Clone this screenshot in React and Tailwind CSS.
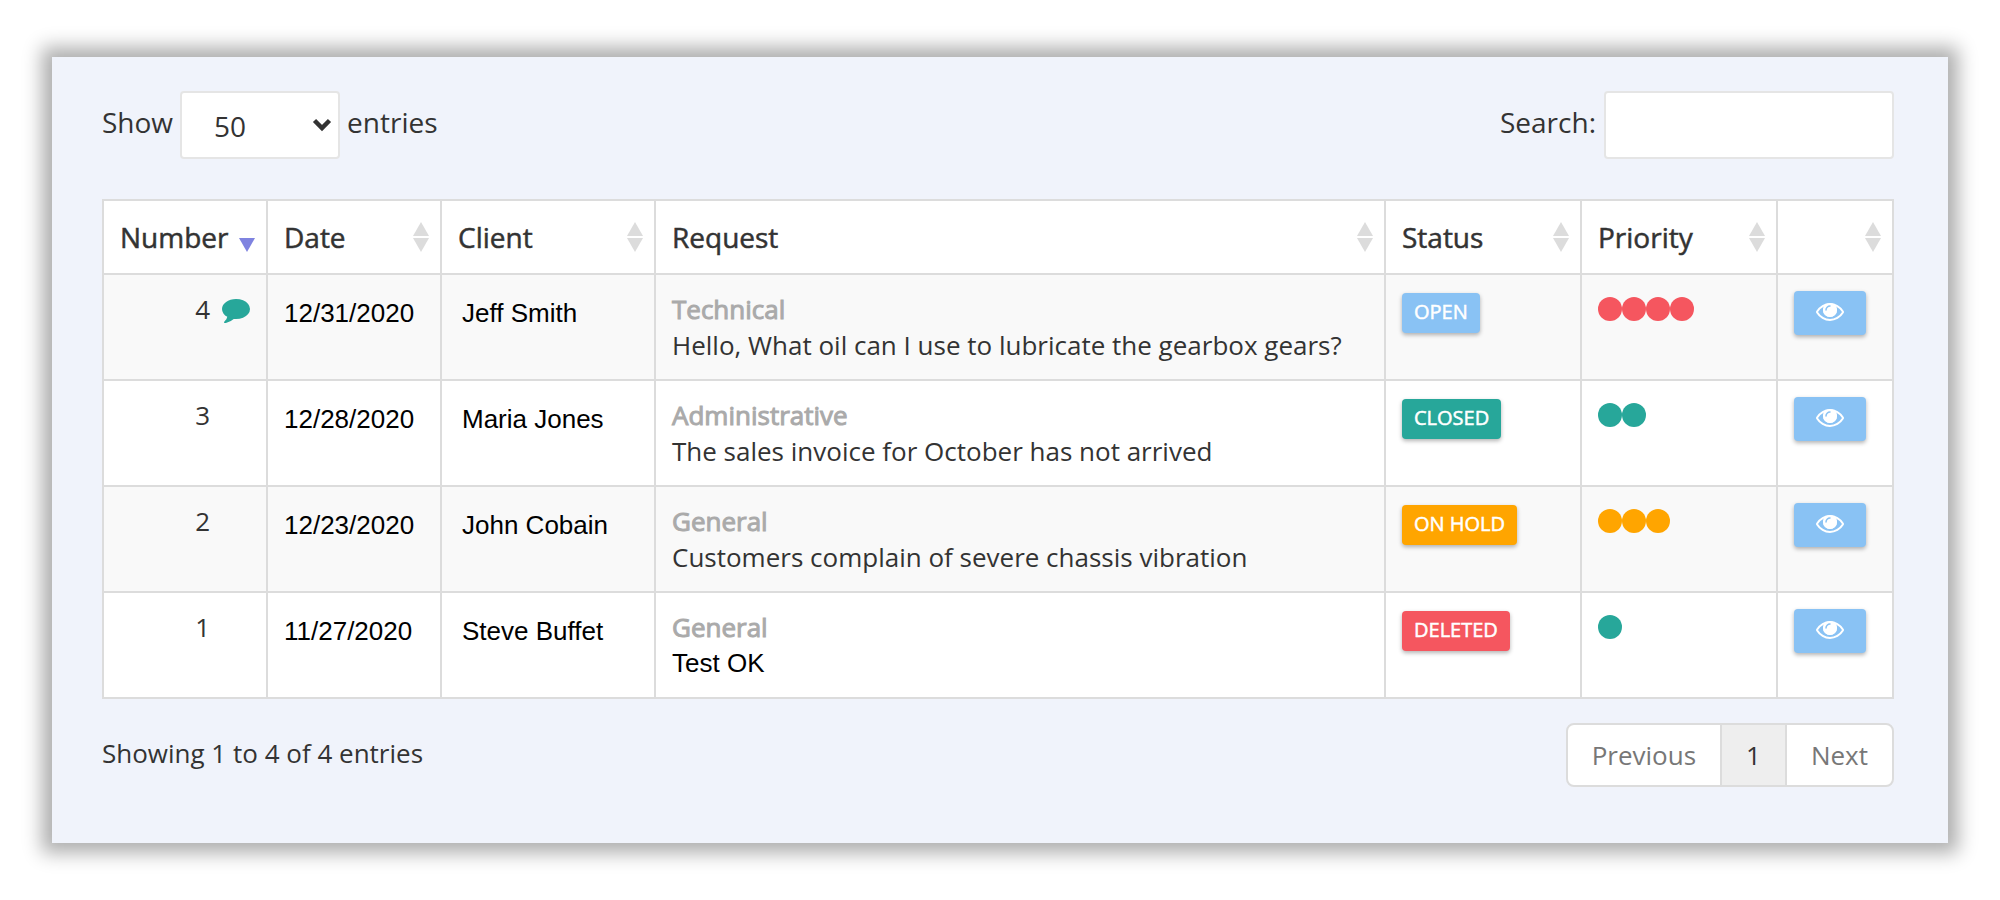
import { useState } from "react";

const columns = ["Number", "Date", "Client", "Request", "Status", "Priority", ""];

const tickets = [
  {
    number: 4,
    hasComment: true,
    date: "12/31/2020",
    client: "Jeff Smith",
    category: "Technical",
    request: "Hello, What oil can I use to lubricate the gearbox gears?",
    status: "OPEN",
    priority: 4,
  },
  {
    number: 3,
    date: "12/28/2020",
    client: "Maria Jones",
    category: "Administrative",
    request: "The sales invoice for October has not arrived",
    status: "CLOSED",
    priority: 2,
  },
  {
    number: 2,
    date: "12/23/2020",
    client: "John Cobain",
    category: "General",
    request: "Customers complain of severe chassis vibration",
    status: "ON HOLD",
    priority: 3,
  },
  {
    number: 1,
    date: "11/27/2020",
    client: "Steve Buffet",
    category: "General",
    request: "Test OK",
    plain: true,
    status: "DELETED",
    priority: 1,
  },
];

const statusColors = {
  OPEN: "bg-[#89c2f4]",
  CLOSED: "bg-[#27a79a]",
  "ON HOLD": "bg-[#ffa500]",
  DELETED: "bg-[#f5565f]",
};

const priorityColors = {
  1: "bg-[#27a79a]",
  2: "bg-[#27a79a]",
  3: "bg-[#ffa500]",
  4: "bg-[#f5565f]",
};

function SortIcon({ sorted }) {
  return (
    <svg viewBox="0 0 16 30" className="w-4 h-[30px] shrink-0" aria-hidden="true">
      {!sorted && <path d="M8 0 L16 14 H0 Z" fill="#dcdcdc" />}
      <path d="M0 16 H16 L8 30 Z" fill={sorted ? "#7f83e0" : "#dcdcdc"} />
    </svg>
  );
}

function CommentIcon() {
  return (
    <svg viewBox="0 0 1792 1792" className="w-7 h-7" fill="#27a79a" aria-hidden="true">
      <path d="M1792 896q0 174-120 321.500t-326 233-450 85.500q-70 0-145-8-198 175-460 242-49 14-114 22-17 2-30.500-9t-17.500-29v-1q-3-4-.5-12t2-10 4.500-9.500l6-9 7-8.500 8-9q7-8 31-34.500t34.500-38 31-39.500 32.500-51 27-59 26-76q-157-89-247.500-220t-90.500-281q0-130 71-248.500t191-204.500 286-136.500 348-50.500q244 0 450 85.500t326 233 120 321.500z" />
    </svg>
  );
}

function EyeIcon() {
  return (
    <svg viewBox="0 0 1792 1792" className="w-7 h-7" fill="#ffffff" aria-hidden="true">
      <path d="M1664 960q-152-236-381-353 61 104 61 225 0 185-131.500 316.500t-316.500 131.500-316.500-131.500-131.500-316.500q0-121 61-225-229 117-381 353 133 205 333.500 326.500t434.500 121.500 434.500-121.500 333.500-326.500zM1792 960q0 34-20 69-140 230-376.500 368.500t-499.500 138.500-499.500-139-376.500-368q-20-35-20-69t20-69q140-229 376.500-368t499.500-139 499.500 139 376.500 368q20 35 20 69z" />
      <circle cx="896" cy="832" r="448" />
      <path
        d="M640 832q0-106 75-181t181-75"
        fill="none"
        stroke="#89c2f4"
        strokeWidth="96"
        strokeLinecap="round"
      />
    </svg>
  );
}

function App() {
  let [pageSize, setPageSize] = useState("50");
  let [search, setSearch] = useState("");

  return (
    <div className="min-h-screen bg-white px-[52px] py-[57px] font-['Open_Sans',sans-serif] text-[26px] leading-9 text-[#333333]">
      <div className="bg-[#f0f3fb] pt-[34px] pb-14 pl-[50px] pr-[54px] shadow-[0_0_18px_10px_rgba(0,0,0,0.32)]">
        {/* toolbar */}
        <div className="flex justify-between mb-10 text-[28px] leading-[62px]">
          <div className="flex gap-[7px]">
            <label htmlFor="page-size">Show</label>
            <div className="relative">
              <select
                id="page-size"
                value={pageSize}
                onChange={(e) => setPageSize(e.target.value)}
                className="appearance-none block w-40 h-[68px] pl-8 pt-[2px] bg-white border-2 border-[#e5e5e5] rounded leading-[62px]"
              >
                <option>10</option>
                <option>25</option>
                <option>50</option>
                <option>100</option>
              </select>
              <svg
                viewBox="0 0 20 14"
                className="absolute right-2 top-[27px] w-5 h-3.5 pointer-events-none"
                fill="none"
                stroke="#333333"
                strokeWidth="4.5"
                aria-hidden="true"
              >
                <path d="M2.500 2.500 L10 10 L17.500 2.500" />
              </svg>
            </div>
            <span>entries</span>
          </div>
          <div className="flex gap-2">
            <label htmlFor="search">Search:</label>
            <input
              id="search"
              type="search"
              value={search}
              onChange={(e) => setSearch(e.target.value)}
              className="w-[290px] h-[68px] px-4 bg-white border-2 border-[#e5e5e5] rounded"
            />
          </div>
        </div>

        {/* tickets */}
        <table className="w-full table-fixed border-collapse bg-white">
          <colgroup>
            <col className="w-[164px]" />
            <col className="w-[174px]" />
            <col className="w-[214px]" />
            <col />
            <col className="w-[196px]" />
            <col className="w-[196px]" />
            <col className="w-[116px]" />
          </colgroup>
          <thead>
            <tr>
              {columns.map((name, index) => (
                <th
                  key={index}
                  className="border-2 border-[#dcdcdc] p-0 text-left font-normal text-[28px] [-webkit-text-stroke:0.5px]"
                >
                  <div className="flex items-center justify-between h-[72px] pl-4 pr-[11px]">
                    <span>{name}</span>
                    <SortIcon sorted={index === 0} />
                  </div>
                </th>
              ))}
            </tr>
          </thead>
          <tbody>
            {tickets.map((ticket) => (
              <tr key={ticket.number} className="odd:bg-[#f9f9f9] align-top">
                <td className="border-2 border-[#dcdcdc] p-4">
                  <div className="flex justify-end gap-3">
                    <span>{ticket.number}</span>
                    <span className="w-7 pt-1">{ticket.hasComment && <CommentIcon />}</span>
                  </div>
                </td>
                <td className="border-2 border-[#dcdcdc] px-4 py-5 font-['Liberation_Sans',sans-serif] text-black">
                  {ticket.date}
                </td>
                <td className="border-2 border-[#dcdcdc] px-5 py-5 font-['Liberation_Sans',sans-serif] text-black">
                  {ticket.client}
                </td>
                <td className="border-2 border-[#dcdcdc] p-4">
                  <div className="text-[#aaaaaa] [-webkit-text-stroke:1px]">{ticket.category}</div>
                  <div
                    className={
                      ticket.plain ? "font-['Liberation_Sans',sans-serif] text-black" : ""
                    }
                  >
                    {ticket.request}
                  </div>
                </td>
                <td className="border-2 border-[#dcdcdc] px-4 py-[18px]">
                  <span
                    className={`block w-fit h-10 px-3 rounded text-white text-xl leading-[38px] [-webkit-text-stroke:0.5px] shadow-[0_2px_4px_rgba(0,0,0,0.3)] ${statusColors[ticket.status]}`}
                  >
                    {ticket.status}
                  </span>
                </td>
                <td className="border-2 border-[#dcdcdc] px-4 py-[22px]">
                  <div className="flex">
                    {Array.from({ length: ticket.priority }, (_, i) => (
                      <span
                        key={i}
                        className={`w-6 h-6 rounded-full ${priorityColors[ticket.priority]}`}
                      />
                    ))}
                  </div>
                </td>
                <td className="border-2 border-[#dcdcdc] p-4">
                  <button
                    aria-label="View"
                    className="flex justify-center w-[72px] h-11 pt-1.5 rounded bg-[#89c2f4] shadow-[0_2px_4px_rgba(0,0,0,0.3)] cursor-pointer"
                  >
                    <EyeIcon />
                  </button>
                </td>
              </tr>
            ))}
          </tbody>
        </table>

        {/* footer */}
        <div className="flex justify-between mt-6">
          <p className="pt-3">Showing 1 to 4 of 4 entries</p>
          <div className="flex h-16 bg-white border-2 border-[#dcdcdc] rounded-lg overflow-hidden">
            <button className="px-6 text-[#777777]">Previous</button>
            <button className="px-6 border-x-2 border-[#dcdcdc] bg-[#eeeeee]">1</button>
            <button className="px-6 text-[#777777]">Next</button>
          </div>
        </div>
      </div>
    </div>
  );
}

export default App;
